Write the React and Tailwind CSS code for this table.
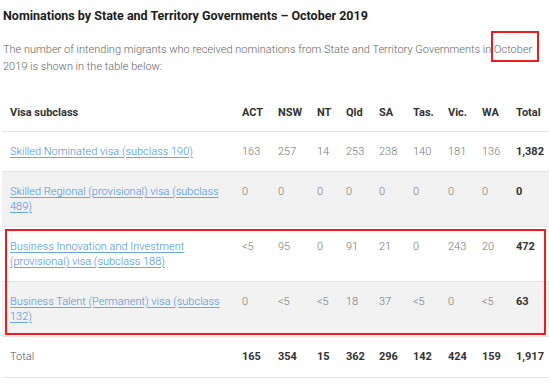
import React from 'react';

const states = ['ACT', 'NSW', 'NT', 'Qld', 'SA', 'Tas.', 'Vic.', 'WA'];

const rows = [
    { visa: 'Skilled Nominated visa (subclass 190)', values: ['163', '257', '14', '253', '238', '140', '181', '136'], total: '1,382' },
    { visa: 'Skilled Regional (provisional) visa (subclass 489)', values: ['0', '0', '0', '0', '0', '0', '0', '0'], total: '0' },
    { visa: 'Business Innovation and Investment (provisional) visa (subclass 188)', values: ['<5', '95', '0', '91', '21', '0', '243', '20'], total: '472' },
    { visa: 'Business Talent (Permanent) visa (subclass 132)', values: ['0', '<5', '<5', '18', '37', '<5', '0', '<5'], total: '63' },
];

const totals = ['165', '354', '15', '362', '296', '142', '424', '159'];

const App = () => {
    return (
        <div className="relative w-[549px] h-[388px] overflow-hidden bg-white antialiased font-['Roboto',sans-serif]">
            <h2 className="pl-[3px] pt-[7px] text-[12.5px] leading-[18px] font-bold text-[#1c1c1c]">
                Nominations by State and Territory Governments – October 2019
            </h2>
            <p className="pl-[3px] mt-[16px] text-[11px] leading-[17px] font-light text-[#666]">
                The number of intending migrants who received nominations from State and Territory Governments in{' '}
                <span className="relative">
                    October
                    <span className="absolute left-[-3px] right-[-7px] top-[-12px] bottom-[-6px] border-2 border-[#ee1c1c]"></span>
                </span>{' '}
                2019 is shown in the table below:
            </p>

            <table className="mt-[17px] ml-[2px] w-[547px] table-fixed border-collapse text-[11px] leading-[15px]">
                <colgroup>
                    <col className="w-[232px]" />
                    <col className="w-[36px]" />
                    <col className="w-[39px]" />
                    <col className="w-[29px]" />
                    <col className="w-[33px]" />
                    <col className="w-[34px]" />
                    <col className="w-[35px]" />
                    <col className="w-[34px]" />
                    <col className="w-[34px]" />
                    <col className="w-[41px]" />
                </colgroup>
                <thead>
                    <tr className="border-b border-[#e4e4e4]">
                        <th className="pl-2 pt-[13px] pb-[11px] text-left font-bold text-[#333]">Visa subclass</th>
                        {states.map(s => (
                            <th key={s} className="pl-2 pt-[13px] pb-[11px] text-left font-bold text-[#333]">{s}</th>
                        ))}
                        <th className="pl-2 pt-[13px] pb-[11px] text-left font-bold text-[#333]">Total</th>
                    </tr>
                </thead>
                <tbody>
                    {rows.map((row, i) => (
                        <tr key={i} className={`border-b border-[#e4e4e4] ${i % 2 === 1 ? 'bg-[#f2f2f2]' : 'bg-white'}`}>
                            <td className="pl-2 pr-2 py-3 align-top">
                                <a href="#" className="text-[#4a90e2] font-light underline decoration-[#6aa6f0] underline-offset-2">{row.visa}</a>
                            </td>
                            {row.values.map((v, j) => (
                                <td key={j} className="pl-2 py-3 align-top font-light text-[#777]">{v}</td>
                            ))}
                            <td className="pl-2 py-3 align-top font-bold text-[#333]">{row.total}</td>
                        </tr>
                    ))}
                    <tr className="border-b border-[#e4e4e4]">
                        <td className="pl-2 pt-[12px] pb-[13px] font-light text-[#555]">Total</td>
                        {totals.map((t, j) => (
                            <td key={j} className="pl-2 pt-[12px] pb-[13px] font-bold text-[#333]">{t}</td>
                        ))}
                        <td className="pl-2 pt-[12px] pb-[13px] font-bold text-[#333]">1,917</td>
                    </tr>
                </tbody>
            </table>

            <div className="absolute left-[5px] top-[229px] w-[541px] h-[106px] border-2 border-[#ee1c1c] pointer-events-none"></div>
        </div>
    );
};

export default App;
